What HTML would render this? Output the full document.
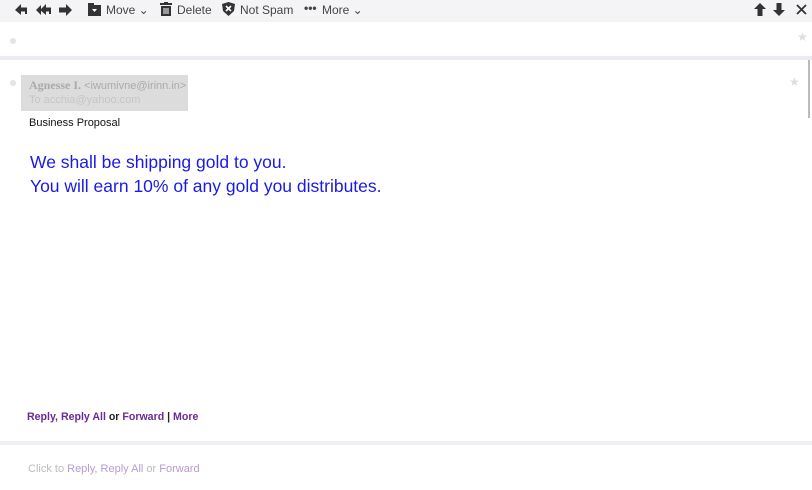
<!DOCTYPE html>
<html><head><style>
body{margin:0;width:812px;height:490px;overflow:hidden;background:#fff;font-family:"Liberation Sans",sans-serif;position:relative}
.a{position:absolute;white-space:nowrap}
.tb{position:absolute;left:0;top:0;width:812px;height:22px;background:#f4f4f6}
.t{font-size:12px;color:#444;top:3px}
.dot{width:6px;height:6px;border-radius:3px;background:#e4e4e6}
.p{color:#6a2a9a}
</style></head><body>
<div class="tb"></div>
<svg class="a" style="left:14px;top:3px" width="60" height="14" viewBox="0 0 60 14">
<path d="M1 7 L7 1 L7 4.5 L13 4.5 L13 11 L11 11 L11 8.5 L7 8.5 L7 12 Z" fill="#333"/>
<path d="M22 7 L27 2 L27 12 Z M26 7 L32 1 L32 4.5 L37 4.5 L37 11 L35 11 L35 8.5 L32 8.5 L32 12 Z" fill="#333"/>
<path d="M58 7 L52 1 L52 4.5 L45 4.5 L45 9.5 L52 9.5 L52 13 Z" fill="#333"/>
</svg>
<svg class="a" style="left:88px;top:3px" width="14" height="13"><rect x="0" y="2" width="13" height="11" fill="#333"/><rect x="0" y="0" width="6" height="3" fill="#333"/><path d="M4 6h5l-2.5 3z" fill="#fff"/></svg>
<span class="a t" style="left:106px">Move ⌄</span>
<svg class="a" style="left:160px;top:2px" width="12" height="14"><rect x="0" y="1" width="12" height="2" fill="#333"/><rect x="4" y="0" width="4" height="2" fill="#333"/><rect x="1" y="4" width="10" height="10" fill="#333"/><path d="M4 6v6M6 6v6M8 6v6" stroke="#fff"/></svg>
<span class="a t" style="left:177px">Delete</span>
<svg class="a" style="left:222px;top:2px" width="13" height="14"><path d="M6.5 0 L13 2 L12 9 L6.5 14 L1 9 L0 2Z" fill="#333"/><path d="M4 4l5 5M9 4l-5 5" stroke="#fff" stroke-width="1.6"/></svg>
<span class="a t" style="left:240px">Not Spam</span>
<span class="a t" style="left:304px;font-weight:bold;top:1px">•••</span>
<span class="a t" style="left:322px">More ⌄</span>
<svg class="a" style="left:753px;top:3px" width="60" height="14">
<path d="M7 0 L13 6 L9.5 6 L9.5 13 L4.5 13 L4.5 6 L1 6Z" fill="#333"/>
<path d="M26 13 L20 7 L23.5 7 L23.5 0 L28.5 0 L28.5 7 L32 7Z" fill="#333"/>
<path d="M44 2l9 9M53 2l-9 9" stroke="#333" stroke-width="1.8"/>
</svg>
<div class="a dot" style="left:10px;top:38px"></div>
<span class="a" style="left:797px;top:30px;color:#ddd;font-size:12px">★</span>
<div class="a" style="left:0;top:56px;width:812px;height:4px;background:#ecebf2"></div>
<div class="a" style="left:808px;top:60px;width:2px;height:58px;background:#bbb"></div>
<div class="a dot" style="left:10px;top:80px"></div>
<span class="a" style="left:789px;top:75px;color:#ddd;font-size:12px">★</span>
<div class="a" style="left:21px;top:75px;width:167px;height:36px;background:#dcdcdc"></div>
<span class="a" style="left:29px;top:78px;font-size:11px;color:#aaa"><b style="font-family:'Liberation Serif',serif;font-size:12px">Agnesse I.</b> &lt;iwumivne@irinn.in&gt;</span>
<span class="a" style="left:29px;top:94px;font-size:11px;color:#c6c6c6">To acchia@yahoo.com</span>
<span class="a" style="left:29px;top:117px;font-size:11px;color:#111">Business Proposal</span>
<div class="a" style="left:30px;top:150px;font-size:17.5px;color:#1a1ae6;line-height:24px">We shall be shipping gold to you.<br>You will earn 10% of any gold you distributes.</div>
<span class="a" style="left:27px;top:411px;font-size:10.6px;font-weight:bold;color:#222"><span class="p">Reply, Reply All</span> or <span class="p">Forward</span> | <span class="p">More</span></span>
<div class="a" style="left:0;top:441px;width:812px;height:4px;background:#efeef4"></div>
<span class="a" style="left:28px;top:463px;font-size:11px;color:#bbb">Click to <span style="color:#b89ad0">Reply, Reply All</span> or <span style="color:#b89ad0">Forward</span></span>
</body></html>
